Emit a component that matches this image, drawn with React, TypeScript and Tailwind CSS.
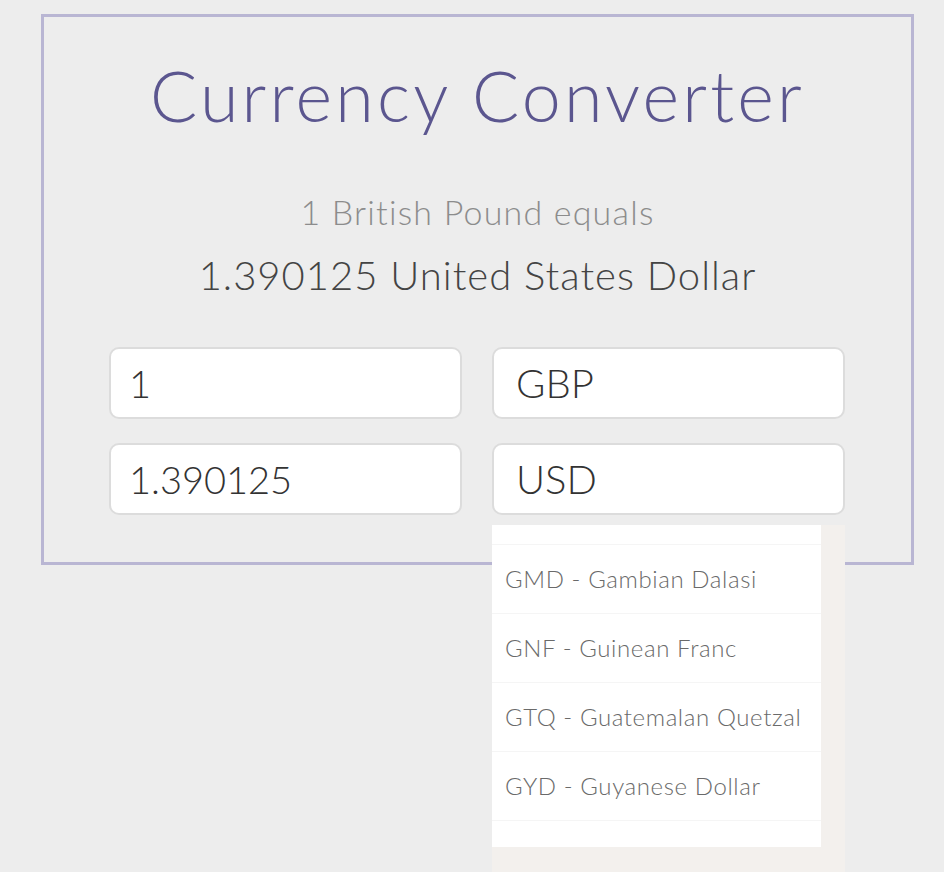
import React, { useState } from 'react';

const currencies = [
  { code: 'GHS', name: 'Ghanaian Cedi' },
  { code: 'GMD', name: 'Gambian Dalasi' },
  { code: 'GNF', name: 'Guinean Franc' },
  { code: 'GTQ', name: 'Guatemalan Quetzal' },
  { code: 'GYD', name: 'Guyanese Dollar' },
];

const App: React.FC = () => {
  const [amount, setAmount] = useState('1');
  const [result, setResult] = useState('1.390125');

  return (
    <div className="min-h-screen bg-[#ededed] pt-[14px] font-['Lato','Open_Sans',sans-serif] font-light">
      <div className="ml-[41px] w-[873px] h-[551px] border-[3px] border-[#b9b6d3] flex flex-col items-center">
        <h1 className="mt-[38px] text-[70px] leading-[80px] text-[#5b568f] tracking-[3.2px] font-light">
          Currency Converter
        </h1>
        <p className="mt-[57px] text-[34px] leading-[40px] text-[#8c8c8c] tracking-[1.2px]">1 British Pound equals</p>
        <p className="mt-[18px] text-[40px] leading-[50px] text-[#444444] tracking-[1px]">
          1.390125 United States Dollar
        </p>

        <div className="mt-[47px] w-full pl-[65px] pr-[66px] grid grid-cols-2 gap-x-[30px] gap-y-[24px]">
          <input
            value={amount}
            onChange={(e) => setAmount(e.target.value)}
            className="h-[72px] rounded-[10px] border-2 border-[#dcdcdc] bg-white px-[18px] text-[38px] text-[#333] outline-none"
          />
          <div className="h-[72px] rounded-[10px] border-2 border-[#dcdcdc] bg-white px-[22px] flex items-center text-[40px] text-[#333]">
            GBP
          </div>
          <input
            value={result}
            onChange={(e) => setResult(e.target.value)}
            className="h-[72px] rounded-[10px] border-2 border-[#dcdcdc] bg-white px-[18px] text-[38px] text-[#333] outline-none"
          />
          <div className="relative">
            <div className="h-[72px] rounded-[10px] border-2 border-[#dcdcdc] bg-white px-[22px] flex items-center text-[40px] text-[#333]">
              USD
            </div>
            <div className="absolute left-0 top-[82px] w-[353px] h-[347px] bg-[#f3f0ed] z-10">
              <ul className="w-[329px] h-[322px] bg-white overflow-hidden">
                <li className="h-[20px] border-b border-[#f5f5f5]" />
                {currencies.slice(1).map((c) => (
                  <li
                    key={c.code}
                    className="h-[69px] border-b border-[#f5f5f5] pl-[13px] flex items-center text-[24px] tracking-[0.6px] text-[#6a6a6a]"
                  >
                    {c.code} - {c.name}
                  </li>
                ))}
              </ul>
            </div>
          </div>
        </div>
      </div>
    </div>
  );
};

export default App;
